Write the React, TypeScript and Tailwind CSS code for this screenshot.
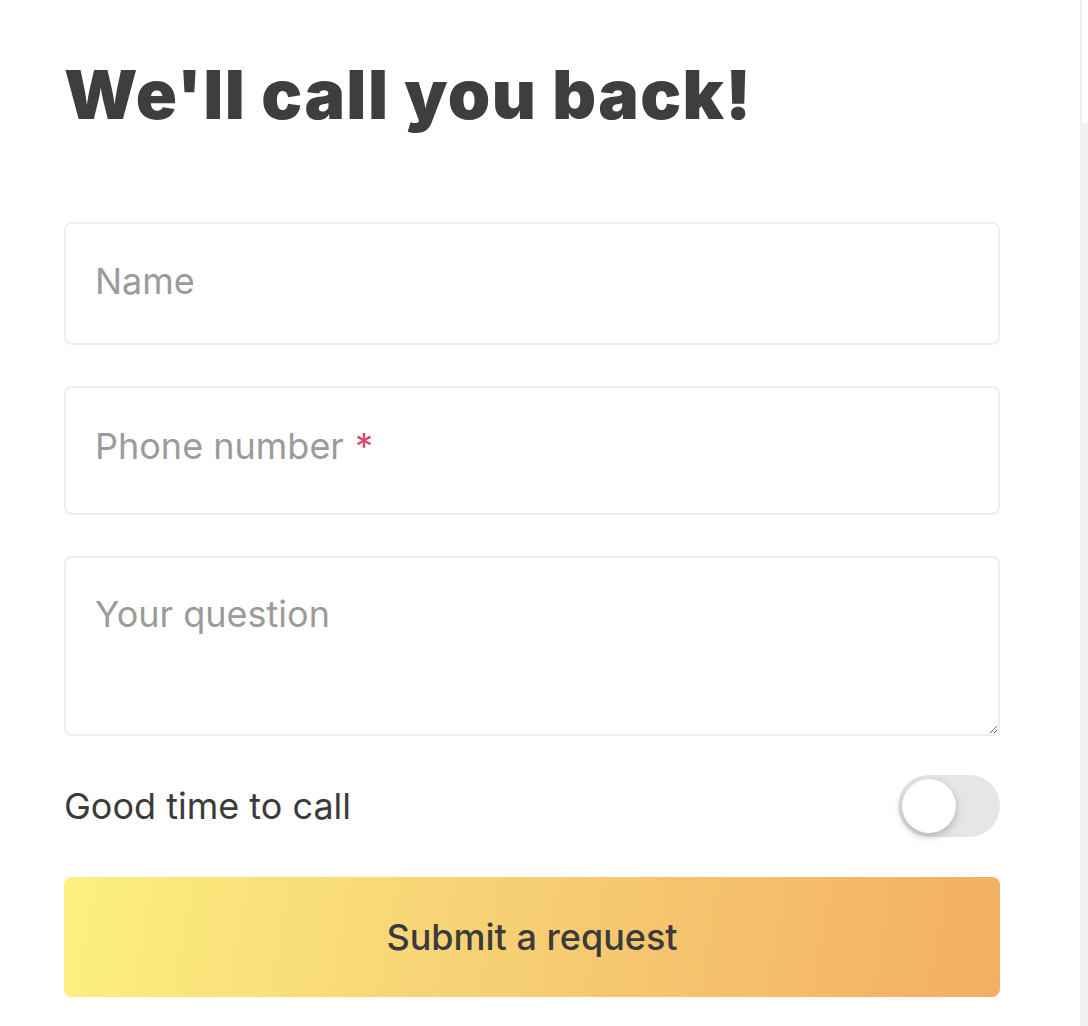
import React from "react";

export default function App() {
  return (
    <div className="flex min-h-[1026px] w-full bg-white" style={{ fontFamily: "Inter, 'Noto Sans', sans-serif" }}>
      <div className="flex-1 pl-16 pr-[80px]">
        <h1 className="mt-[52px] text-[68px] leading-[84px] font-black tracking-[1.4px] text-[#3d3e40]">
          We'll call you back!
        </h1>
        <form className="mt-[86px] flex flex-col">
          <input
            type="text"
            placeholder="Name"
            className="h-[123px] w-full rounded-lg border-2 border-[#eeeeee] px-[29px] pb-[6px] text-[36px] text-[#3d3e40] outline-none placeholder:text-[#9b9b9b]"
          />
          <div className="mt-[41px] flex h-[129px] w-full items-center rounded-lg border-2 border-[#eeeeee] px-[29px] pb-[10px] text-[36px] text-[#9b9b9b]">
            <span>Phone number</span>
            <span className="ml-[11px] text-[#d4486e]">*</span>
          </div>
          <textarea
            placeholder="Your question"
            className="mt-[41px] h-[180px] w-full resize-y rounded-lg border-2 border-[#eeeeee] px-[29px] pt-[33px] text-[36px] leading-[46px] text-[#3d3e40] outline-none placeholder:text-[#9b9b9b]"
          />
          <div className="mt-[39px] flex items-center justify-between">
            <span className="text-[36px] text-[#3b3b3b]">Good time to call</span>
            <div className="relative h-[62px] w-[102px] rounded-full bg-[#e6e6e6]">
              <div className="absolute left-[4px] top-[4px] h-[54px] w-[54px] rounded-full bg-white shadow-[0_3px_8px_rgba(0,0,0,0.25)]" />
            </div>
          </div>
          <button
            type="button"
            className="mt-[40px] h-[120px] w-full rounded-lg bg-[linear-gradient(100deg,#fdf07f_0%,#f7d476_40%,#f3ae62_100%)] text-[36px] font-medium text-[#3b3b3b]"
          >
            Submit a request
          </button>
        </form>
      </div>
      <div className="flex w-[8px] flex-col border-l-2 border-[#f0f0f0]">
        <div className="h-[123px] bg-white" />
        <div className="flex-1 bg-[#eef2f7]" />
      </div>
    </div>
  );
}
